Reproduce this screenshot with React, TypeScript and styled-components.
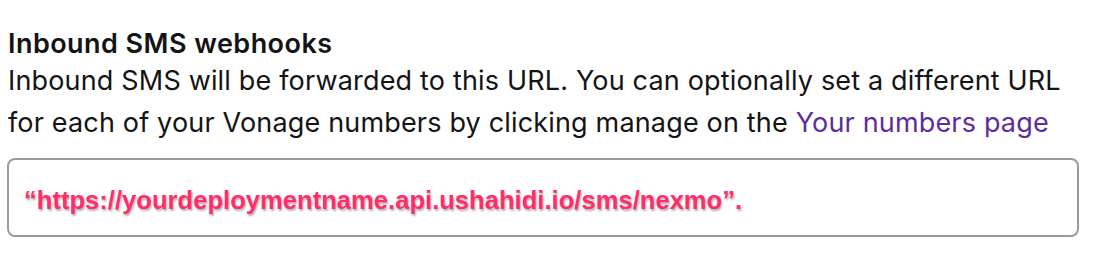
import React from "react";
import styled, { createGlobalStyle } from "styled-components";

const Global = createGlobalStyle`
  html, body { margin: 0; padding: 0; background: #ffffff; }
  body { font-family: Inter, "Noto Sans", sans-serif; }
`;

const Section = styled.section`
  padding: 27px 0 0 8px;
  display: flex;
  flex-direction: column;
`;

const Title = styled.h3`
  margin: 0;
  font-family: Inter, sans-serif;
  font-size: 27px;
  font-weight: 600;
  letter-spacing: 0.45px;
  line-height: 33px;
  color: #131415;
`;

const Description = styled.p`
  margin: 0;
  font-family: Inter, sans-serif;
  font-size: 27px;
  font-weight: 400;
  letter-spacing: 0.17px;
  line-height: 42px;
  color: #131415;
  white-space: nowrap;
`;

const Link = styled.a`
  color: #5c2d9c;
  text-decoration: none;
`;

const Field = styled.div`
  margin: 14px 0 0 -1px;
  height: 79px;
  width: 1072px;
  box-sizing: border-box;
  border: 2px solid #9b9b9b;
  border-radius: 8px;
  display: flex;
  align-items: center;
  padding: 5px 0 0 15px;
`;

const Url = styled.span`
  font-family: "Liberation Sans", Arial, sans-serif;
  font-weight: 700;
  font-size: 25.6px;
  color: #ff2d6c;
  text-shadow: 1px 2px 2px rgba(0, 0, 0, 0.3), 0 0 2px #fff;
`;

export default function App() {
  return (
    <>
      <Global />
      <Section>
        <Title>Inbound SMS webhooks</Title>
        <Description>
          Inbound SMS will be forwarded to this URL. You can optionally set a different URL
          <br />
          for each of your Vonage numbers by clicking manage on the{" "}
          <Link href="#">Your numbers page</Link>
        </Description>
        <Field>
          <Url>“https://yourdeploymentname.api.ushahidi.io/sms/nexmo”.</Url>
        </Field>
      </Section>
    </>
  );
}
